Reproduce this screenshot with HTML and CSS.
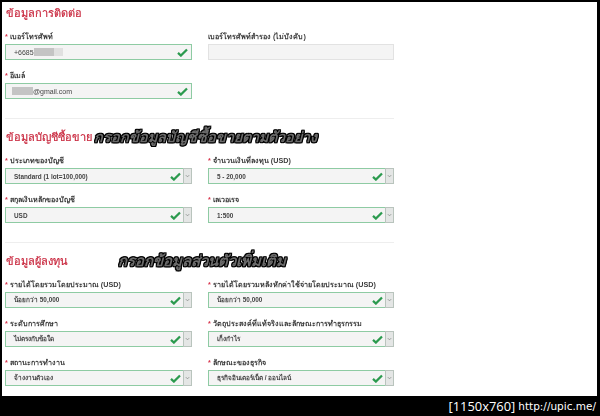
FILE: index.html
```html
<!DOCTYPE html>
<html>
<head>
    <title>ข้อมูลการติดต่อ</title>
    <link rel="stylesheet" href="styles.css">
</head>
<body>
    <svg class="defs" width="0" height="0">
        <symbol id="check" viewBox="0 0 12 10">
            <path d="M1 5.4 L4.2 8.4 L11 1.6" fill="none" stroke="#2b9a4e" stroke-width="2.5"/>
        </symbol>
        <symbol id="chevron" viewBox="0 0 6 4">
            <path d="M1 1 L3 3 L5 1" fill="none" stroke="#8a8f8c" stroke-width="1"/>
        </symbol>
    </svg>

    <div class="sheet">
        <section class="block">
            <div class="block-head"><h2>ข้อมูลการติดต่อ</h2></div>
            <div class="fields">
                <div class="field">
                    <label><i>*</i> เบอร์โทรศัพท์</label>
                    <div class="box valid text">
                        <span>+6685</span><b class="mask dark"></b><b class="mask light"></b>
                        <svg class="tick"><use href="#check"/></svg>
                    </div>
                </div>
                <div class="field">
                    <label>เบอร์โทรศัพท์สำรอง (ไม่บังคับ)</label>
                    <div class="box text"></div>
                </div>
                <div class="field">
                    <label><i>*</i> อีเมล์</label>
                    <div class="box valid text">
                        <b class="mask email"></b><span>@gmail.com</span>
                        <svg class="tick"><use href="#check"/></svg>
                    </div>
                </div>
            </div>
        </section>

        <section class="block">
            <div class="block-head">
                <h2>ข้อมูลบัญชีซื้อขาย</h2>
                <span class="note">กรอกข้อมูลบัญชีซื้อขายตามตัวอย่าง</span>
            </div>
            <div class="fields">
                <div class="field">
                    <label><i>*</i> ประเภทของบัญชี</label>
                    <div class="box valid">
                        <span>Standard (1 lot=100,000)</span>
                        <svg class="tick"><use href="#check"/></svg>
                        <div class="arrow"><svg><use href="#chevron"/></svg></div>
                    </div>
                </div>
                <div class="field">
                    <label><i>*</i> จำนวนเงินที่ลงทุน (USD)</label>
                    <div class="box valid">
                        <span>5 - 20,000</span>
                        <svg class="tick"><use href="#check"/></svg>
                        <div class="arrow"><svg><use href="#chevron"/></svg></div>
                    </div>
                </div>
                <div class="field">
                    <label><i>*</i> สกุลเงินหลักของบัญชี</label>
                    <div class="box valid">
                        <span>USD</span>
                        <svg class="tick"><use href="#check"/></svg>
                        <div class="arrow"><svg><use href="#chevron"/></svg></div>
                    </div>
                </div>
                <div class="field">
                    <label><i>*</i> เลเวอเรจ</label>
                    <div class="box valid">
                        <span>1:500</span>
                        <svg class="tick"><use href="#check"/></svg>
                        <div class="arrow"><svg><use href="#chevron"/></svg></div>
                    </div>
                </div>
            </div>
        </section>

        <section class="block last">
            <div class="block-head">
                <h2>ข้อมูลผู้ลงทุน</h2>
                <span class="note wide">กรอกข้อมูลส่วนตัวเพิ่มเติม</span>
            </div>
            <div class="fields">
                <div class="field">
                    <label><i>*</i> รายได้โดยรวมโดยประมาณ (USD)</label>
                    <div class="box valid">
                        <span>น้อยกว่า 50,000</span>
                        <svg class="tick"><use href="#check"/></svg>
                        <div class="arrow"><svg><use href="#chevron"/></svg></div>
                    </div>
                </div>
                <div class="field">
                    <label><i>*</i> รายได้โดยรวมหลังหักค่าใช้จ่ายโดยประมาณ (USD)</label>
                    <div class="box valid">
                        <span>น้อยกว่า 50,000</span>
                        <svg class="tick"><use href="#check"/></svg>
                        <div class="arrow"><svg><use href="#chevron"/></svg></div>
                    </div>
                </div>
                <div class="field">
                    <label><i>*</i> ระดับการศึกษา</label>
                    <div class="box valid">
                        <span>ไม่ตรงกับข้อใด</span>
                        <svg class="tick"><use href="#check"/></svg>
                        <div class="arrow"><svg><use href="#chevron"/></svg></div>
                    </div>
                </div>
                <div class="field">
                    <label><i>*</i> วัตถุประสงค์ที่แท้จริงและลักษณะการทำธุรกรรม</label>
                    <div class="box valid">
                        <span>เก็งกำไร</span>
                        <svg class="tick"><use href="#check"/></svg>
                        <div class="arrow"><svg><use href="#chevron"/></svg></div>
                    </div>
                </div>
                <div class="field">
                    <label><i>*</i> สถานะการทำงาน</label>
                    <div class="box valid">
                        <span>จ้างงานตัวเอง</span>
                        <svg class="tick"><use href="#check"/></svg>
                        <div class="arrow"><svg><use href="#chevron"/></svg></div>
                    </div>
                </div>
                <div class="field">
                    <label><i>*</i> ลักษณะของธุรกิจ</label>
                    <div class="box valid">
                        <span>ธุรกิจอินเตอร์เน็ต / ออนไลน์</span>
                        <svg class="tick"><use href="#check"/></svg>
                        <div class="arrow"><svg><use href="#chevron"/></svg></div>
                    </div>
                </div>
            </div>
        </section>
    </div>

    <div class="stamp"><span class="size">[1150x760]</span><span class="url">http://upic.me/</span></div>
</body>
</html>
```

FILE: styles.css
```css
html, body {
    margin: 0;
    height: 416px;
    overflow: hidden;
    background-color: #000;
}

body {
    font-family: "Liberation Sans", "Noto Sans", "DejaVu Sans", sans-serif;
    padding-top: 2px;
    box-sizing: border-box;
}

.defs {
    position: absolute;
}

.sheet {
    height: 394px;
    margin: 0 3px 0 2px;
    padding: 3px 0 0 3px;
    box-sizing: border-box;
    background-color: #fff;
    filter: blur(0.35px);
}

.block {
    width: 389px;
    padding-bottom: 19px;
    margin-bottom: 10px;
    border-bottom: 1px solid #eee;
}

.block.last {
    border-bottom: none;
    padding-bottom: 0;
    margin-bottom: 0;
}

.block-head {
    display: flex;
    align-items: center;
    gap: 2px;
    height: 16px;
    margin-bottom: 11px;
}

.block-head h2 {
    margin: 0 0 0 1px;
    font-size: 11px;
    line-height: 16px;
    font-weight: 400;
    color: #c9283e;
    -webkit-text-stroke: 0.2px #c9283e;
}

.note {
    font-size: 14.3px;
    line-height: 16px;
    font-weight: 700;
    font-style: italic;
    white-space: nowrap;
    color: #6a6a6a;
    text-shadow: 1px 0 0 #000, -1px 0 0 #000, 0 1px 0 #000, 0 -1px 0 #000, 1px 1px 0 #000, -1px -1px 0 #000, 1px -1px 0 #000, -1px 1px 0 #000;
}

.note.wide {
    margin-left: 48px;
    font-size: 14.9px;
}

.fields {
    display: grid;
    grid-template-columns: 187px 186px;
    column-gap: 16px;
    row-gap: 11px;
}

.field label {
    display: block;
    height: 10px;
    margin-bottom: 2px;
    font-size: 7.2px;
    line-height: 10px;
    font-weight: 700;
    color: #3c3c3c;
    white-space: nowrap;
}

.field label i {
    font-style: normal;
    color: #d8324a;
}

.box {
    display: flex;
    align-items: center;
    height: 16px;
    padding-left: 8px;
    box-sizing: border-box;
    background-color: #f4f4f4;
    border: 1px solid #e2e2e2;
    font-size: 6.4px;
    font-weight: 700;
    color: #444;
    white-space: nowrap;
}

.box.valid {
    border-color: #8ecba3;
}

.box.text {
    padding-left: 8px;
    font-size: 7px;
    font-weight: 400;
}

.mask {
    display: block;
    height: 8px;
}

.mask.dark {
    width: 20px;
    background-color: #c4c4c4;
}

.mask.light {
    width: 9px;
    background-color: #e0e0e0;
}

.mask.email {
    width: 21px;
    margin-left: -2px;
    background-color: #c4c4c4;
}

.tick {
    width: 11px;
    height: 9px;
    margin-left: auto;
    margin-right: 2px;
    flex: none;
}

.box.text .tick {
    margin-right: 3px;
}

.arrow {
    display: flex;
    align-items: center;
    justify-content: center;
    flex: none;
    width: 9px;
    height: 16px;
    margin: 0 -1px 0 0;
    box-sizing: border-box;
    background-color: #e4e6e5;
    border: 1px solid #b9c4bd;
}

.arrow svg {
    width: 5px;
    height: 4px;
}

.stamp {
    display: flex;
    justify-content: flex-end;
    align-items: center;
    gap: 3px;
    height: 20px;
    padding-right: 4px;
    color: #fff;
}

.size {
    font-family: "Open Sans", sans-serif;
    font-size: 12.9px;
}

.url {
    font-family: "DejaVu Sans", sans-serif;
    font-size: 10.5px;
}
```
